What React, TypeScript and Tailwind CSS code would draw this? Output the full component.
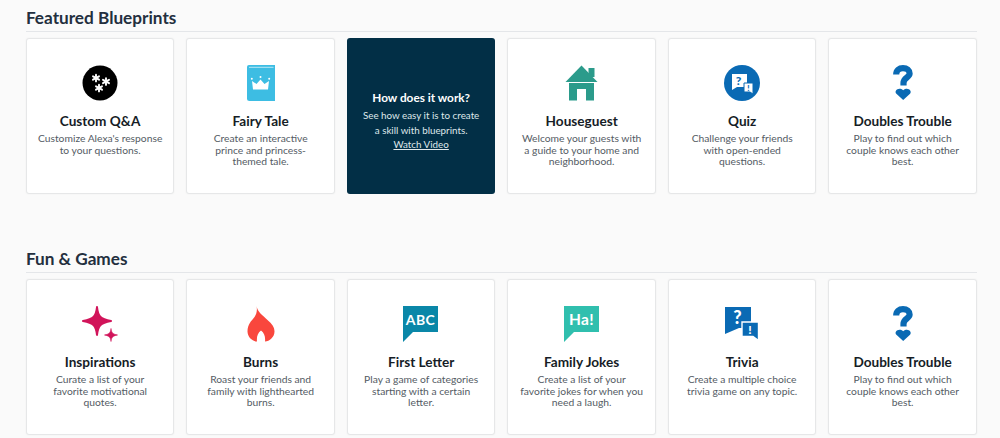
import React from "react";

const Asterisk: React.FC<{ x: number; y: number }> = ({ x, y }) => (
  <g transform={`translate(${x} ${y})`} stroke="#fff" strokeWidth="1.9" strokeLinecap="round">
    <path d="M0 -3.400V3.400" />
    <path d="M-3 -1.700L3 1.700" />
    <path d="M-3 1.700L3 -1.700" />
  </g>
);

const QaIcon = () => (
  <svg width="36" height="36" viewBox="0 0 36 36">
    <circle cx="18" cy="18" r="17.500" fill="#000" />
    <Asterisk x={14} y={13} />
    <Asterisk x={24} y={16.500} />
    <Asterisk x={17} y={23} />
  </svg>
);

const BookIcon = () => (
  <svg width="28" height="36" viewBox="0 0 28 36">
    <path d="M2 0H28V36H2.500A2.500 2.500 0 0 1 0 33.500V2A2 2 0 0 1 2 0Z" fill="#3dbde3" />
    <path d="M2.500 2.400H26" stroke="#9fdff2" strokeWidth="1.100" strokeLinecap="round" />
    <path d="M5 16L9.500 19L13.500 14.500L17.500 19L22 16L21 24.500H6Z" fill="#fff" />
    <circle cx="4.800" cy="13.800" r="1" fill="#fff" />
    <circle cx="13.500" cy="12" r="1" fill="#fff" />
    <circle cx="22.200" cy="13.800" r="1" fill="#fff" />
  </svg>
);

const HouseIcon = () => (
  <svg width="33" height="36" viewBox="0 0 33 36">
    <path d="M23.500 3H29.500V12H23.500Z" fill="#2b9b8b" />
    <path d="M16.500 0.500L32.500 17H0.500Z" fill="#2b9b8b" />
    <path d="M4 18H29V35.500H21V24H12V35.500H4Z" fill="#2b9b8b" />
  </svg>
);

const QuizIcon = () => (
  <svg width="36" height="36" viewBox="0 0 36 36">
    <circle cx="18" cy="18" r="18" fill="#0a6ab4" />
    <path d="M8 9H23V22H13L8 25Z" fill="#fff" />
    <text x="14.500" y="20" textAnchor="middle" fontFamily="Lato, sans-serif" fontWeight="900" fontSize="12" fill="#0a6ab4">?</text>
    <path d="M20 18H29V29L26 27H20Z" fill="#fff" stroke="#0a6ab4" strokeWidth="1" />
    <text x="24.500" y="26" textAnchor="middle" fontFamily="Lato, sans-serif" fontWeight="900" fontSize="8" fill="#0a6ab4">!</text>
  </svg>
);

const DoublesIcon = () => (
  <svg width="20" height="36" viewBox="0 0 20 36">
    <path
      d="M3.200 9.500C3.200 5.400 6 3.200 10 3.200C14 3.200 16.600 5.400 16.600 8.600C16.600 12.600 10.500 12.600 10.500 18V20.500"
      fill="none"
      stroke="#0a6ab4"
      strokeWidth="6.200"
    />
    <path d="M10.200 35L3.400 28.800C0.600 25.800 5.600 21.600 10.200 25.200C14.800 21.600 19.600 25.800 17 28.800Z" fill="#0a6ab4" />
  </svg>
);

const SparkleIcon = () => (
  <svg width="36" height="36" viewBox="0 0 36 36">
    <path d="M15 1C16 10 18 13 29 15C18 17 16 20 15 29C14 20 12 17 1 15C12 13 14 10 15 1Z" fill="#d1145a" stroke="#d1145a" strokeWidth="2" strokeLinejoin="round" />
    <path d="M29 22.500C29.400 26.500 30.500 28 35.500 29C30.500 30 29.400 31.500 29 35.500C28.600 31.500 27.500 30 22.500 29C27.500 28 28.600 26.500 29 22.500Z" fill="#d1145a" stroke="#d1145a" strokeWidth="0.600" />
  </svg>
);

const FlameIcon = () => (
  <svg width="28" height="36" viewBox="0 0 28 36">
    <path
      d="M9.500 0C10.500 6 15.500 9 20.500 14C25 18 27.500 21 27.500 25.500C27.500 31 22.500 35.500 18 35.500C18.500 31 17.500 27 14 24.500C10.500 27 9.500 31 10 35.500C5.500 35.500 0.500 31 0.500 25.500C0.500 18 4.500 15 7.500 11C9.500 8 10.500 4 9.500 0Z"
      fill="#f9473d"
    />
  </svg>
);

const BubbleIcon: React.FC<{ color: string; label: string; size: number }> = ({ color, label, size }) => (
  <svg width="36" height="36" viewBox="0 0 36 36">
    <path d="M0 0H35V26H10L0 36Z" fill={color} />
    <text
      x="17.500"
      y="18.500"
      textAnchor="middle"
      fontFamily="Lato, sans-serif"
      fontWeight="700"
      fontSize={size}
      letterSpacing="0.400"
      fill="#fff"
    >
      {label}
    </text>
  </svg>
);

const TriviaIcon = () => (
  <svg width="34" height="34" viewBox="0 0 34 34">
    <path d="M0 0H26V21H14L0 27Z" fill="#0a6ab4" />
    <text x="12.500" y="17" textAnchor="middle" fontFamily="Lato, sans-serif" fontWeight="900" fontSize="18" fill="#fff">?</text>
    <path d="M17 15H33.500V33.500L28 29.500H17Z" fill="#0a6ab4" stroke="#fff" strokeWidth="1.400" />
    <text x="25" y="27" textAnchor="middle" fontFamily="Lato, sans-serif" fontWeight="900" fontSize="12" fill="#fff">!</text>
  </svg>
);

type Blueprint = {
  title: string;
  lines: string[];
  icon: React.ReactNode;
};

const featured: (Blueprint | "video")[] = [
  { title: "Custom Q&A", lines: ["Customize Alexa's response", "to your questions."], icon: <QaIcon /> },
  { title: "Fairy Tale", lines: ["Create an interactive", "prince and princess-", "themed tale."], icon: <BookIcon /> },
  "video",
  { title: "Houseguest", lines: ["Welcome your guests with", "a guide to your home and", "neighborhood."], icon: <HouseIcon /> },
  { title: "Quiz", lines: ["Challenge your friends", "with open-ended", "questions."], icon: <QuizIcon /> },
  { title: "Doubles Trouble", lines: ["Play to find out which", "couple knows each other", "best."], icon: <DoublesIcon /> },
];

const funAndGames: Blueprint[] = [
  { title: "Inspirations", lines: ["Curate a list of your", "favorite motivational", "quotes."], icon: <SparkleIcon /> },
  { title: "Burns", lines: ["Roast your friends and", "family with lighthearted", "burns."], icon: <FlameIcon /> },
  { title: "First Letter", lines: ["Play a game of categories", "starting with a certain", "letter."], icon: <BubbleIcon color="#0a87a8" label="ABC" size={14} /> },
  { title: "Family Jokes", lines: ["Create a list of your", "favorite jokes for when you", "need a laugh."], icon: <BubbleIcon color="#30bfae" label="Ha!" size={15.500} /> },
  { title: "Trivia", lines: ["Create a multiple choice", "trivia game on any topic."], icon: <TriviaIcon /> },
  { title: "Doubles Trouble", lines: ["Play to find out which", "couple knows each other", "best."], icon: <DoublesIcon /> },
];

const Card: React.FC<Blueprint> = ({ title, lines, icon }) => (
  <div className="h-[156px] rounded-[3px] border border-[#e6e7e8] bg-white pt-[26px] text-center shadow-[0_0_2px_rgba(0,0,0,0.06)]">
    <div className="flex h-[36px] items-center justify-center">{icon}</div>
    <h3 className="mt-[11px] text-[13.600px] leading-[18px] font-bold text-[#161d26]">{title}</h3>
    <p className="mt-[3px] text-[10.300px] leading-[11.500px] text-[#545b64]">
      {lines.map((line) => (
        <span key={line} className="block">
          {line}
        </span>
      ))}
    </p>
  </div>
);

const VideoCard = () => (
  <div className="flex h-[156px] flex-col items-center justify-center rounded-[3px] bg-[#022f46] pt-[10px] text-center text-white">
    <h3 className="text-[11.800px] leading-[15px] font-bold">How does it work?</h3>
    <p className="mt-[3px] text-[9.800px] leading-[14.500px] text-[#dfe7ea]">
      See how easy it is to create
      <br />a skill with blueprints.
      <br />
      <a href="#" className="underline">
        Watch Video
      </a>
    </p>
  </div>
);

const Section: React.FC<{ title: string; className: string; children: React.ReactNode }> = ({ title, className, children }) => (
  <section className={className}>
    <h2 className="border-b border-[#e4e6e9] pb-[3px] text-[17.200px] leading-[21px] font-bold text-[#232f3e]">{title}</h2>
    <div className="mt-[6px] grid grid-cols-6 gap-x-[12px]">{children}</div>
  </section>
);

export default function App() {
  return (
    <div className="h-[438px] w-[1000px] overflow-hidden bg-[#fafafa] pr-[23.100px] pl-[25.900px] font-['Lato',sans-serif]">
      <Section title="Featured Blueprints" className="pt-[7px]">
        {featured.map((item) =>
          item === "video" ? <VideoCard key="video" /> : <Card key={item.title} {...item} />
        )}
      </Section>
      <Section title="Fun & Games" className="pt-[54px]">
        {funAndGames.map((item) => (
          <Card key={item.title} {...item} />
        ))}
      </Section>
    </div>
  );
}
